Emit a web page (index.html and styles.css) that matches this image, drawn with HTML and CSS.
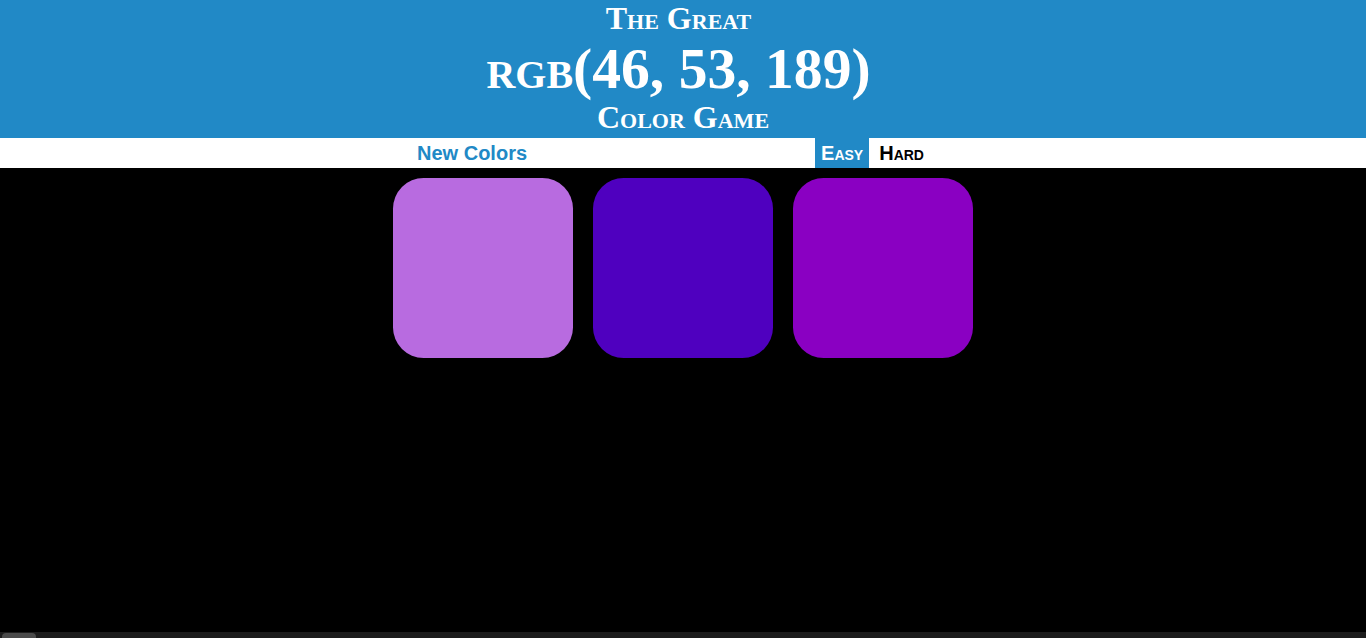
FILE: index.html
```html
<!DOCTYPE html>
<html lang="en">
<head>
<meta charset="utf-8">
<title>Color Game</title>
<link rel="stylesheet" href="styles.css">
</head>
<body>
<h1 class="title">
  <span class="title-line first">The Great</span>
  <span class="title-rgb">rgb<span class="nums">(46, 53, 189)</span></span>
  <span class="title-line last">Color Game</span>
</h1>
<div class="stripe">
  <div class="stripe-group">
    <button class="btn reset">New Colors</button>
    <span class="message"></span>
    <button class="btn mode selected">Easy</button>
    <button class="btn mode">Hard</button>
  </div>
</div>
<div class="board">
  <div class="square sq1"></div>
  <div class="square sq2"></div>
  <div class="square sq3"></div>
</div>
<div class="hscroll"><div class="hscroll-thumb"></div></div>
</body>
</html>
```

FILE: styles.css
```css
html, body {
  margin: 0;
  padding: 0;
  background: #000;
  height: 100%;
  overflow: hidden;
}

.title {
  margin: 0;
  background: #2189c6;
  color: #fff;
  text-align: center;
  font-family: "Liberation Serif", "Times New Roman", serif;
  font-weight: bold;
  font-variant: small-caps;
  padding-bottom: 5px;
}

.title-line {
  display: block;
  font-size: 32px;
}

.title-line.first {
  line-height: 36px;
  padding-right: 9px;
}

.title-line.last {
  line-height: 32px;
}

.title-rgb {
  display: block;
  font-size: 57.6px;
  line-height: 65px;
  padding-right: 9px;
}

.stripe {
  background: #fff;
  height: 30px;
  display: flex;
  justify-content: center;
}

.stripe-group {
  display: flex;
  align-items: stretch;
  margin-right: 25px;
}

.btn {
  border: none;
  background: none;
  margin: 0;
  padding: 0 6px;
  height: 30px;
  font-family: "Liberation Sans", Arial, sans-serif;
  font-weight: bold;
  font-size: 20px;
  color: #2189c6;
  cursor: pointer;
  outline: none;
}

.mode {
  font-variant: small-caps;
  color: #000;
}

.mode.selected {
  background: #2189c6;
  color: #fff;
  margin-right: 4px;
}

.message {
  width: 282px;
}

.board {
  width: 600px;
  margin: 0 auto;
  display: flex;
  flex-wrap: wrap;
}

.square {
  width: 180px;
  height: 180px;
  margin: 10px;
  border-radius: 17%;
}

.sq1 { background: #b86be0; }
.sq2 { background: #4f00bf; }
.sq3 { background: #8a00c2; }

.hscroll {
  position: fixed;
  left: 0;
  right: 0;
  bottom: 0;
  height: 6px;
  background: #1c1c1c;
}

.hscroll-thumb {
  position: absolute;
  left: 2px;
  bottom: 0;
  width: 34px;
  height: 5px;
  background: #4b4b4b;
  border-radius: 4px 4px 0 0;
}
```
